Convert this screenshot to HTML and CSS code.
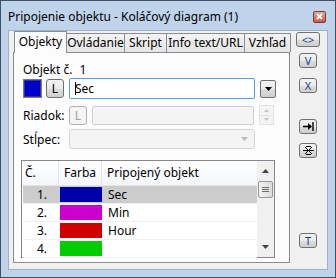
FILE: index.html
```html
<!DOCTYPE html>
<html lang="sk">
<head>
    <meta charset="UTF-8">
    <title>Pripojenie objektu</title>
    <link rel="stylesheet" href="styles.css">
</head>
<body>

<div class="window">
    <div class="titlebar">
        <span class="title">Pripojenie objektu - Koláčový diagram (1)</span>
        <span class="close">
            <svg width="7" height="7" viewBox="0 0 7 7"><path d="M1 1L6 6M6 1L1 6" stroke="#fff" stroke-width="1.8"/></svg>
        </span>
    </div>

    <div class="client">
        <div class="left">
            <div class="tabs">
                <div class="tab active t1">Objekty</div>
                <div class="tab t2">Ovládanie</div>
                <div class="tab t3">Skript</div>
                <div class="tab t4">Info text/URL</div>
                <div class="tab t5">Vzhľad</div>
            </div>
            <div class="panel">
                <div class="objnum">Objekt č.<span class="num">1</span></div>

                <div class="row row1">
                    <span class="swatch"></span>
                    <span class="btn small">L</span>
                    <span class="input focus"><span class="caret"></span>Sec</span>
                    <span class="btn drop">
                        <svg width="7" height="4" viewBox="0 0 7 4"><path d="M0 0H7L3.5 4Z" fill="#000"/></svg>
                    </span>
                </div>

                <div class="row row2">
                    <label>Riadok:</label>
                    <span class="btn small disabled">L</span>
                    <span class="input disabled"></span>
                    <span class="spin">
                        <span class="spin-half"><svg width="5" height="3" viewBox="0 0 5 3"><path d="M0 3H5L2.5 0Z" fill="#c4c4c4"/></svg></span>
                        <span class="spin-half"><svg width="5" height="3" viewBox="0 0 5 3"><path d="M0 0H5L2.5 3Z" fill="#c4c4c4"/></svg></span>
                    </span>
                </div>

                <div class="row row3">
                    <label>Stĺpec:</label>
                    <span class="combo disabled">
                        <svg width="7" height="4" viewBox="0 0 7 4"><path d="M0 0H7L3.5 4Z" fill="#b8b8b8"/></svg>
                    </span>
                </div>

                <div class="list">
                    <div class="list-body">
                        <div class="list-head">
                            <span class="c1">Č.</span>
                            <span class="c2">Farba</span>
                            <span class="c3">Pripojený objekt</span>
                        </div>
                        <div class="list-row selected">
                            <span class="c1">1.</span>
                            <span class="c2"><span class="cell-color" style="background:#0000a8"></span></span>
                            <span class="c3">Sec</span>
                        </div>
                        <div class="list-row">
                            <span class="c1">2.</span>
                            <span class="c2"><span class="cell-color" style="background:#cc00cc"></span></span>
                            <span class="c3">Min</span>
                        </div>
                        <div class="list-row">
                            <span class="c1">3.</span>
                            <span class="c2"><span class="cell-color" style="background:#d00000"></span></span>
                            <span class="c3">Hour</span>
                        </div>
                        <div class="list-row">
                            <span class="c1">4.</span>
                            <span class="c2"><span class="cell-color" style="background:#00cc00"></span></span>
                            <span class="c3"></span>
                        </div>
                    </div>
                    <div class="scrollbar">
                        <span class="arrow"><svg width="7" height="4" viewBox="0 0 7 4"><path d="M0 4H7L3.5 0Z" fill="#404040"/></svg></span>
                        <span class="thumb"><span class="grip"></span><span class="grip"></span><span class="grip"></span></span>
                        <span class="track"></span>
                        <span class="arrow"><svg width="7" height="4" viewBox="0 0 7 4"><path d="M0 0H7L3.5 4Z" fill="#404040"/></svg></span>
                    </div>
                </div>
            </div>
        </div>

        <div class="side">
            <span class="btn side-btn wide">&lt;&gt;</span>
            <span class="btn side-btn">V</span>
            <span class="btn side-btn b-x">X</span>
            <span class="btn side-btn b-arrow">
                <svg width="11" height="9" viewBox="0 0 11 9"><path d="M0 4.5H8" stroke="#000" stroke-width="1.6"/><path d="M5 1L9 4.5L5 8Z" fill="#000"/><path d="M10 0V9" stroke="#000" stroke-width="1.4"/></svg>
            </span>
            <span class="btn side-btn b-star">
                <svg width="11" height="9" viewBox="0 0 11 9"><path d="M0 4.5H11M2 1L9 8M9 1L2 8M3 0.5H8M3 8.5H8" stroke="#000" stroke-width="1"/></svg>
            </span>
            <span class="btn side-btn b-t">T</span>
        </div>
    </div>
</div>

</body>
</html>
```

FILE: styles.css
```css
body {
    margin: 0;
    padding: 0;
    font-family: "Noto Sans", "Open Sans", sans-serif;
    font-size: 11px;
    color: #000;
}
.window {
    width: 336px;
    height: 278px;
    box-sizing: border-box;
    border: 1px solid #3b5363;
    background-color: #bfd3ea;
    display: flex;
    flex-direction: column;
}
.titlebar {
    height: 29px;
    display: flex;
    align-items: center;
    padding-left: 7px;
    padding-right: 9px;
}
.title {
    flex: 1;
    font-size: 12px;
    margin-top: 2px;
}
.close {
    width: 13px;
    height: 12px;
    box-sizing: border-box;
    border: 1px solid #7a3a33;
    border-radius: 2px;
    background: linear-gradient(#e8a89e, #c65a4c);
    display: flex;
    align-items: center;
    justify-content: center;
    margin-top: 2px;
}
.client {
    margin: 0 7px 7px 7px;
    flex: 1;
    background-color: #f0f0f0;
    border: 1px solid #9fb2c6;
    display: flex;
}
.left {
    margin-left: 4px;
    margin-top: 0;
    width: 277px;
    flex: none;
}
.tabs {
    display: flex;
    height: 21px;
    align-items: flex-end;
    margin-left: 1px;
}
.tab {
    height: 19px;
    box-sizing: border-box;
    border: 1px solid #898c95;
    border-bottom: none;
    margin-right: -1px;
    background: linear-gradient(#f3f3f3, #e5e5e5);
    text-align: center;
    white-space: nowrap;
    overflow: hidden;
    line-height: 18px;
    font-size: 12px;
    flex: none;
}
.tab.active {
    height: 22px;
    background: #fcfcfc;
    position: relative;
    z-index: 1;
    margin-bottom: -1px;
    line-height: 19px;
}
.t1 { width: 53px; }
.t2 { width: 59px; }
.t3 { width: 43px; }
.t4 { width: 79px; }
.t5 { width: 47px; }
.panel {
    height: 211px;
    box-sizing: border-box;
    border: 1px solid #898c95;
    background-color: #fcfcfc;
    padding: 10px 0 0 9px;
}
.objnum {
    height: 14px;
    line-height: 14px;
    font-size: 12px;
}
.num {
    margin-left: 7px;
}
.row {
    display: flex;
    align-items: center;
}
.row label {
    width: 46px;
    font-size: 12px;
}
.row1 {
    margin-top: 1px;
    height: 21px;
}
.row2 {
    margin-top: 6px;
    height: 20px;
}
.row3 {
    margin-top: 4px;
    height: 20px;
}
.swatch {
    width: 19px;
    height: 19px;
    box-sizing: border-box;
    border: 1px solid #7a7a7a;
    background-color: #0000cc;
    box-shadow: inset 0 0 0 1px #3232a0;
}
.btn {
    box-sizing: border-box;
    border: 1px solid #707070;
    border-radius: 3px;
    background: linear-gradient(#f2f2f2 0%, #ebebeb 50%, #dddddd 51%, #cfcfcf 100%);
    display: flex;
    align-items: center;
    justify-content: center;
    font-size: 12px;
}
.btn.small {
    width: 18px;
    height: 19px;
    margin-left: 4px;
}
.btn.disabled {
    border-color: #adb2b5;
    background: #f4f4f4;
    color: #a0a0a0;
    margin-left: 0;
}
.input {
    height: 21px;
    box-sizing: border-box;
    border: 1px solid #abadb3;
    background: #fff;
    border-radius: 2px;
    width: 186px;
    margin-left: 5px;
    display: flex;
    align-items: center;
    padding-left: 5px;
    font-size: 12px;
}
.input.focus {
    border-color: #569de5;
}
.caret {
    width: 1px;
    height: 13px;
    background: #000;
    margin-right: -1px;
}
.input.disabled {
    background: #f4f4f4;
    border-color: #cfcfcf;
    height: 19px;
    width: 162px;
}
.drop {
    width: 16px;
    height: 18px;
    margin-left: 5px;
    border-radius: 2px;
}
.spin {
    width: 15px;
    height: 20px;
    margin-left: 5px;
    box-sizing: border-box;
    border: 1px solid #e2e2e2;
    display: flex;
    flex-direction: column;
}
.spin-half {
    flex: 1;
    display: flex;
    align-items: center;
    justify-content: center;
    background: #f4f4f4;
}
.spin-half + .spin-half {
    border-top: 1px solid #e2e2e2;
}
.combo {
    width: 186px;
    height: 20px;
    box-sizing: border-box;
    border: 1px solid #d5d5d5;
    border-radius: 3px;
    background: #f4f4f4;
    display: flex;
    align-items: center;
    justify-content: flex-end;
    padding-right: 6px;
}
.list {
    margin-top: 11px;
    margin-left: -2px;
    width: 254px;
    height: 98px;
    box-sizing: border-box;
    border: 1px solid #828790;
    background: #fff;
    display: flex;
}
.list-body {
    flex: 1;
}
.list-head {
    display: flex;
    height: 24px;
    align-items: center;
    background: linear-gradient(#ffffff, #f3f6fa);
    border-bottom: 1px solid #e5e5e5;
    font-size: 12px;
}
.list-head span {
    height: 24px;
    line-height: 24px;
    box-sizing: border-box;
    border-right: 1px solid #e5e5e5;
}
.list-head .c1 {
    padding-left: 3px;
}
.list-head .c2 {
    padding-left: 5px;
}
.list-head .c3 {
    padding-left: 5px;
    border-right: none;
}
.c1 {
    width: 37px;
}
.c2 {
    width: 43px;
}
.c3 {
    flex: 1;
}
.list-row {
    display: flex;
    height: 17px;
    align-items: center;
    margin-left: 1px;
    border-bottom: 1px solid #f0f0f0;
    font-size: 12px;
}
.list-row .c1 {
    width: 36px;
    text-align: right;
    padding-right: 12px;
    box-sizing: border-box;
}
.list-row .c2 {
    display: flex;
    height: 17px;
    align-items: center;
    padding-left: 1px;
}
.list-row .c3 {
    padding-left: 5px;
}
.list-row.selected {
    background-color: #cccccc;
}
.cell-color {
    width: 42px;
    height: 15px;
}
.scrollbar {
    width: 17px;
    background: #f0f0f0;
    display: flex;
    flex-direction: column;
    align-items: center;
}
.scrollbar .arrow {
    height: 20px;
    display: flex;
    align-items: center;
    justify-content: center;
}
.scrollbar .track {
    flex: 1;
}
.thumb {
    width: 15px;
    height: 17px;
    box-sizing: border-box;
    border: 1px solid #979797;
    border-radius: 2px;
    background: linear-gradient(90deg, #f2f2f2, #dcdcdc);
    display: flex;
    flex-direction: column;
    align-items: center;
    justify-content: center;
    gap: 1px;
}
.grip {
    width: 7px;
    height: 1px;
    background: #6f6f6f;
}
.side {
    display: flex;
    flex-direction: column;
    align-items: center;
    margin-left: 6px;
    width: 24px;
    flex: none;
}
.side-btn {
    width: 18px;
    height: 15px;
    color: #1c3f96;
    font-size: 11px;
    margin-top: 6px;
    flex: none;
}
.side-btn.wide {
    width: 24px;
    margin-top: 1px;
}
.b-x {
    margin-top: 10px;
}
.b-arrow {
    margin-top: 26px;
}
.b-star {
    margin-top: 9px;
}
.b-t {
    margin-top: 75px;
}
```
